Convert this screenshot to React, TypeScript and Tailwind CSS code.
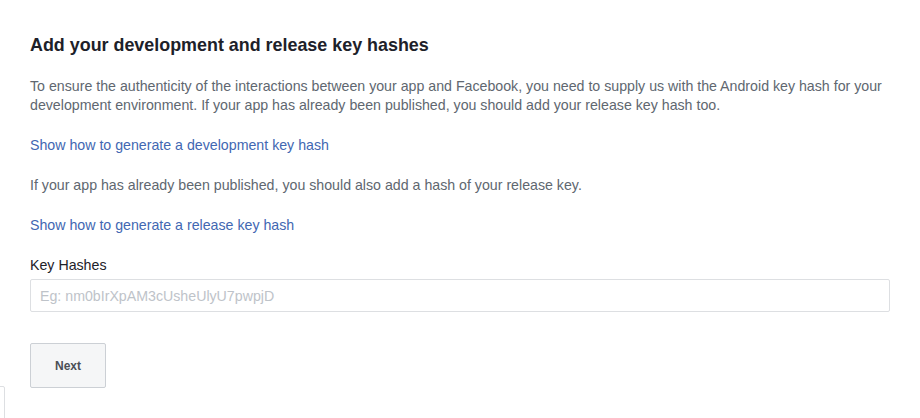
const linkClass = 'text-[#4267b2] hover:underline cursor-pointer'

const App = () => {
  return (
    <div className="relative min-h-[418px] w-[920px] bg-white font-['Helvetica','Liberation_Sans',Arial,sans-serif] text-[14.2px] text-[#606770]">
      {/* leftover edge of a panel peeking in at the bottom-left */}
      <div className="absolute left-[-10px] top-[386px] h-[40px] w-[15px] rounded-[2px] border border-[#dddfe2]" />

      <div className="flex flex-col pl-[30px] pr-[30px] pt-[34px]">
        <h2 className="text-[17.9px] font-bold leading-[22px] text-[#1d2129]">
          Add your development and release key hashes
        </h2>

        <p className="mt-[21px] leading-[19px]">
          To ensure the authenticity of the interactions between your app and Facebook, you need to supply us with the
          Android key hash for your development environment. If your app has already been published, you should add your
          release key hash too.
        </p>

        <div className="mt-[21px] leading-[19px]">
          <a className={linkClass}>Show how to generate a development key hash</a>
        </div>

        <p className="mt-[21px] leading-[19px]">
          If your app has already been published, you should also add a hash of your release key.
        </p>

        <div className="mt-[21px] leading-[19px]">
          <a className={linkClass}>Show how to generate a release key hash</a>
        </div>

        <label className="mt-[21px] leading-[19px] text-[#1d2129]">Key Hashes</label>

        <input
          type="text"
          placeholder="Eg: nm0bIrXpAM3cUsheUlyU7pwpjD"
          className="mt-[4px] h-[33px] w-[860px] rounded-[2px] border border-[#dddfe2] px-[9px] text-[14.2px] text-[#1d2129] placeholder:text-[#bec3c9] focus:outline-none"
        />

        <div className="mt-[31px]">
          <button
            type="button"
            className="h-[45px] w-[76px] rounded-[2px] border border-[#ccd0d5] bg-[#f5f6f7] text-[12px] font-bold text-[#4b4f56]"
          >
            Next
          </button>
        </div>
      </div>
    </div>
  )
}

export default App
